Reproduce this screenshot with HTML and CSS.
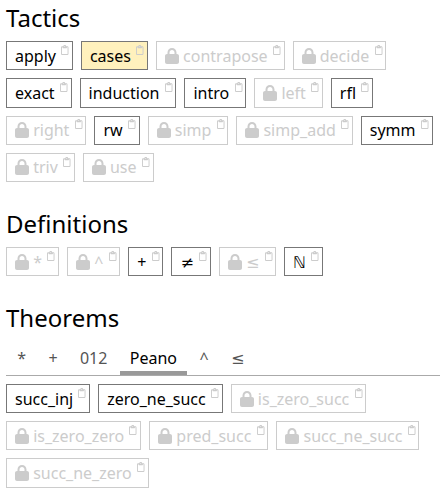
FILE: index.html
```
<!DOCTYPE html>
<html lang="en">
<head>
    <meta charset="UTF-8">
    <meta name="viewport" content="width=device-width, initial-scale=1.0">
    <title>Inventory</title>
    <link rel="stylesheet" href="styles.css">
</head>
<body>

    <div class="inventory">
        <h2>Tactics</h2>
        <div class="inventory-list" id="tactics"></div>

        <h2>Definitions</h2>
        <div class="inventory-list" id="definitions"></div>

        <h2>Theorems</h2>
        <div class="tab-bar">
            <div class="tab">*</div>
            <div class="tab">+</div>
            <div class="tab">012</div>
            <div class="tab active">Peano</div>
            <div class="tab">^</div>
            <div class="tab"><span class="symbol">≤</span></div>
        </div>
        <div class="inventory-list" id="theorems"></div>
    </div>

    <script src="script.js"></script>
</body>
</html>
```
FILE: styles.css
```
body {
    margin: 0;
    font-family: "Noto Sans", "DejaVu Sans", sans-serif;
    font-size: 16px;
    line-height: 24px;
    color: #000;
    background: #fff;
}
.inventory {
    padding-left: 6px;
}
h2 {
    margin: 0 0 5.2px;
    font-size: 24px;
    font-weight: 400;
    line-height: 36px;
}
.inventory-list {
    display: flex;
    flex-wrap: wrap;
    gap: 8px;
}
.inventory-list + h2 {
    margin-top: 24px;
}
.item {
    display: flex;
    height: 24px;
    padding: 1.6px 3.2px 1.6px 8px;
    border: 1px solid #777;
    background: #fff;
}
.item.selected {
    background: #fff1bd;
}
.item.locked {
    border-color: #ccc;
    color: #ccc;
}
.symbol {
    font-family: "DejaVu Sans", sans-serif;
    line-height: 1;
}
.lock {
    width: 14px;
    height: 16px;
    margin: 4px 4.16px 0 0;
    fill: #ccc;
}
.copy {
    width: 7.5px;
    height: 10px;
    margin: 1.2px 0 0 5.3px;
    overflow: visible;
    fill: #ccc;
}
.tab-bar {
    display: flex;
    margin-bottom: 8px;
    border-bottom: 1px solid #aaa;
}
.tab {
    margin: 0 1.6px;
    padding: 4px 9.6px 1.6px;
    border-bottom: 4px solid transparent;
    color: #555;
}
.tab.active {
    border-color: #999;
    color: #000;
}
```
FILE: script.js
```
const lockIcon = `<svg class="lock" viewBox="0 0 448 512"><path d="M144 144v48H304V144c0-44.200-35.800-80-80-80s-80 35.800-80 80zM80 192V144C80 64.500 144.500 0 224 0s144 64.500 144 144v48h16c35.300 0 64 28.700 64 64V448c0 35.300-28.700 64-64 64H64c-35.300 0-64-28.700-64-64V256c0-35.300 28.700-64 64-64H80z"/></svg>`;
const copyIcon = `<svg class="copy" viewBox="0 0 384 512"><path d="M280 64h40c35.300 0 64 28.700 64 64V448c0 35.300-28.700 64-64 64H64c-35.300 0-64-28.700-64-64V128C0 92.700 28.700 64 64 64h40 9.600C121 27.500 153.300 0 192 0s71 27.500 78.400 64H280zM64 112c-8.800 0-16 7.200-16 16V448c0 8.800 7.200 16 16 16H320c8.800 0 16-7.200 16-16V128c0-8.800-7.200-16-16-16H304v24c0 13.300-10.700 24-24 24H192 104c-13.300 0-24-10.700-24-24V112H64zm128-8a24 24 0 1 0 0-48 24 24 0 1 0 0 48z"/></svg>`;

const inventory = {
    tactics: [
        { name: "apply" },
        { name: "cases", state: "selected" },
        { name: "contrapose", state: "locked" },
        { name: "decide", state: "locked" },
        { name: "exact" },
        { name: "induction" },
        { name: "intro" },
        { name: "left", state: "locked" },
        { name: "rfl" },
        { name: "right", state: "locked" },
        { name: "rw" },
        { name: "simp", state: "locked" },
        { name: "simp_add", state: "locked" },
        { name: "symm" },
        { name: "triv", state: "locked" },
        { name: "use", state: "locked" }
    ],
    definitions: [
        { name: "*", state: "locked" },
        { name: "^", state: "locked" },
        { name: "+" },
        { name: "≠", symbol: true },
        { name: "≤", state: "locked", symbol: true },
        { name: "ℕ", symbol: true }
    ],
    theorems: [
        { name: "succ_inj" },
        { name: "zero_ne_succ" },
        { name: "is_zero_succ", state: "locked" },
        { name: "is_zero_zero", state: "locked" },
        { name: "pred_succ", state: "locked" },
        { name: "succ_ne_succ", state: "locked" },
        { name: "succ_ne_zero", state: "locked" }
    ]
};

// Fill each list with its items
Object.keys(inventory).forEach(id => {
    const list = document.getElementById(id);
    inventory[id].forEach(entry => {
        const item = document.createElement("div");
        item.className = "item " + (entry.state || "");
        const name = entry.symbol ? `<span class="symbol">${entry.name}</span>` : entry.name;
        item.innerHTML = `${entry.state === "locked" ? lockIcon : ""}<div class="name">${name}</div>${copyIcon}`;
        list.appendChild(item);
    });
});
```
